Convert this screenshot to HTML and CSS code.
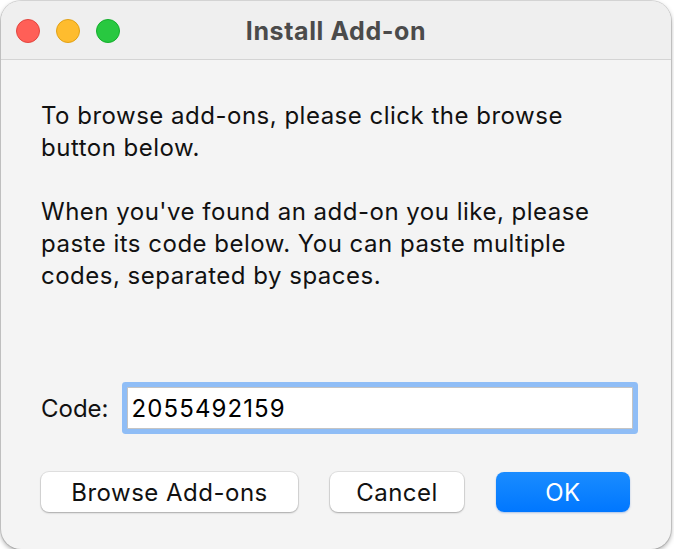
FILE: index.html
```html
<!DOCTYPE html>
<html lang="en">
<head>
    <meta charset="UTF-8">
    <title>Install Add-on</title>
    <link rel="stylesheet" href="styles.css">
</head>
<body>
    <div class="window">
        <div class="titlebar">
            <div class="lights">
                <span class="light red"></span>
                <span class="light yellow"></span>
                <span class="light green"></span>
            </div>
            <div class="title">Install Add-on</div>
            <div></div>
        </div>

        <div class="content">
            <p class="message">To browse add-ons, please click the browse<br>button below.</p>
            <p class="message">When you've found an add-on you like, please<br>paste its code below. You can paste multiple<br>codes, separated by spaces.</p>

            <div class="code-row">
                <label for="code">Code:</label>
                <input id="code" class="code-input" type="text" value="2055492159">
            </div>

            <div class="button-row">
                <button class="btn browse-btn">Browse Add-ons</button>
                <button class="btn cancel-btn">Cancel</button>
                <button class="btn ok-btn">OK</button>
            </div>
        </div>
    </div>
</body>
</html>
```

FILE: styles.css
```css
body {
    margin: 0;
    background-color: #ffffff;
    font-family: 'Inter', 'Liberation Sans', sans-serif;
}
.window {
    width: 670px;
    height: 548px;
    margin: 1px 0 0 1px;
    background-color: #f4f4f4;
    border-radius: 20px;
    overflow: hidden;
    box-shadow: 0 0 0 1px rgba(0, 0, 0, 0.12), 0 2px 5px rgba(0, 0, 0, 0.35);
    display: flex;
    flex-direction: column;
}
.titlebar {
    height: 58px;
    background-color: #efefef;
    border-bottom: 1px solid #d4d4d4;
    display: grid;
    grid-template-columns: 1fr auto 1fr;
    align-items: center;
    padding: 0 15px;
}
.lights {
    display: flex;
    gap: 16px;
    padding-top: 2px;
}
.light {
    width: 24px;
    height: 24px;
    border-radius: 50%;
    box-sizing: border-box;
}
.red {
    background-color: #ff5f57;
    border: 1px solid #e2463f;
}
.yellow {
    background-color: #febc2e;
    border: 1px solid #e1a116;
}
.green {
    background-color: #28c840;
    border: 1px solid #14ae2c;
}
.title {
    font-size: 25px;
    font-weight: 700;
    letter-spacing: 0.6px;
    color: #4b4b4b;
    padding-top: 2px;
}
.content {
    flex: 1;
    display: flex;
    flex-direction: column;
    padding: 40px 38px 0 40px;
}
.message {
    margin: 0 0 32px 0;
    font-size: 24px;
    line-height: 32px;
    letter-spacing: 0.5px;
    color: #111;
}
.code-row {
    margin-top: auto;
    display: flex;
    align-items: center;
    gap: 18px;
    margin-bottom: 43px;
}
.code-row label {
    font-size: 24px;
    color: #111;
}
.code-input {
    flex: 1;
    height: 42px;
    box-sizing: border-box;
    border: 1px solid #c4c4c4;
    border-radius: 1px;
    background-color: #fff;
    padding: 0 4px;
    font-family: 'Inter', 'Liberation Sans', sans-serif;
    font-size: 24px;
    letter-spacing: 1.1px;
    color: #000;
    outline: none;
    box-shadow: 0 0 0 5px #8fbdf6;
}
.button-row {
    display: flex;
    gap: 32px;
    margin-bottom: 37px;
    margin-right: 3px;
}
.btn {
    height: 40px;
    border-radius: 8px;
    font-family: 'Inter', 'Liberation Sans', sans-serif;
    font-size: 24px;
    letter-spacing: 0.5px;
    color: #111;
    background-color: #fff;
    border: none;
    box-shadow: 0 0 0 1px rgba(0, 0, 0, 0.08), 0 1px 2px rgba(0, 0, 0, 0.25);
    padding: 0;
}
.browse-btn {
    width: 257px;
}
.cancel-btn {
    width: 134px;
}
.ok-btn {
    width: 134px;
    margin-left: auto;
    color: #fff;
    background: linear-gradient(#1a8cff, #0077ff);
    box-shadow: 0 1px 2px rgba(0, 80, 200, 0.3);
}
```
